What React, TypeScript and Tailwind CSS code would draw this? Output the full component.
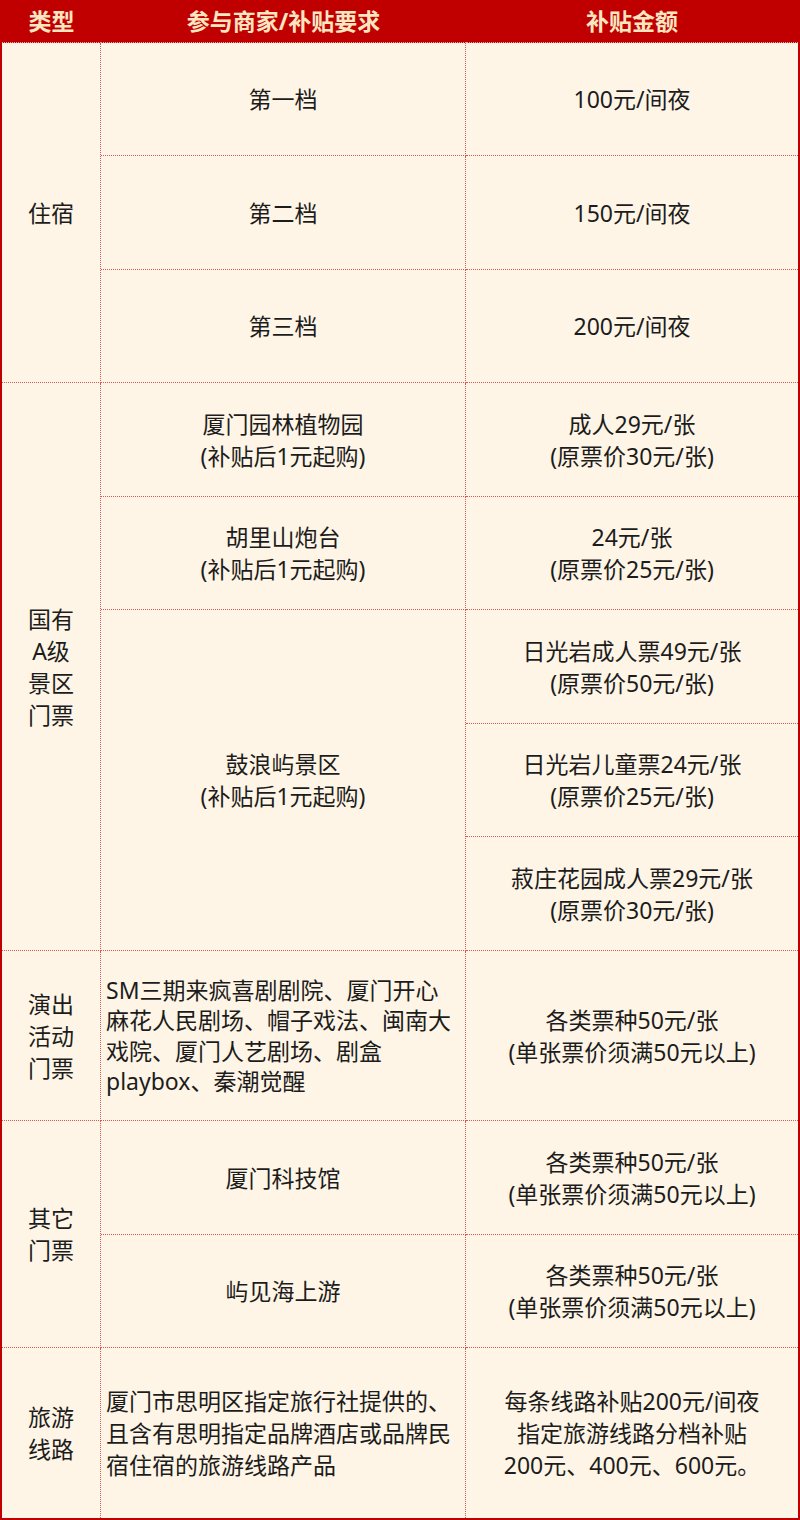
import React from "react";

const cell =
  "border-r border-b border-dotted border-[#d8585a] flex items-center justify-center text-center";
const cellLast =
  "border-b border-dotted border-[#d8585a] flex items-center justify-center text-center";

function Lines({ lines }: { lines: string[] }) {
  return (
    <div className="flex flex-col items-center">
      {lines.map((l, i) => (
        <span key={i} className="whitespace-nowrap">
          {l}
        </span>
      ))}
    </div>
  );
}

export default function App() {
  return (
    <div
      className="w-[800px] h-[1520px] bg-[#fef5e6] text-[#1c1c1c] text-[23px] leading-[32px] border-x-2 border-b-2 border-[#c00000]"
      style={{ fontFamily: '"Noto Sans", "Noto Sans CJK SC", sans-serif' }}
    >
      <div className="grid grid-cols-[99px_365px_1fr] grid-rows-[43px_113px_114px_113px_114px_113px_114px_113px_114px_170px_114px_113px_170px] h-[1518px]">
        {/* header */}
        <div className="bg-[#c00000] text-[#fce6c2] font-bold flex items-center justify-center border-b border-dotted border-[#e9a0a0]">
          类型
        </div>
        <div className="bg-[#c00000] text-[#fce6c2] font-bold flex items-center justify-center border-b border-dotted border-[#e9a0a0]">
          参与商家/补贴要求
        </div>
        <div className="bg-[#c00000] text-[#fce6c2] font-bold flex items-center justify-center border-b border-dotted border-[#e9a0a0]">
          补贴金额
        </div>

        {/* 住宿 */}
        <div className={`${cell} row-span-3`}>住宿</div>
        <div className={cell}>第一档</div>
        <div className={cellLast}>100元/间夜</div>
        <div className={cell}>第二档</div>
        <div className={cellLast}>150元/间夜</div>
        <div className={cell}>第三档</div>
        <div className={cellLast}>200元/间夜</div>

        {/* 国有A级景区门票 */}
        <div className={`${cell} row-span-5`}>
          <Lines lines={["国有", "A级", "景区", "门票"]} />
        </div>
        <div className={cell}>
          <Lines lines={["厦门园林植物园", "(补贴后1元起购)"]} />
        </div>
        <div className={cellLast}>
          <Lines lines={["成人29元/张", "(原票价30元/张)"]} />
        </div>
        <div className={cell}>
          <Lines lines={["胡里山炮台", "(补贴后1元起购)"]} />
        </div>
        <div className={cellLast}>
          <Lines lines={["24元/张", "(原票价25元/张)"]} />
        </div>
        <div className={`${cell} row-span-3`}>
          <Lines lines={["鼓浪屿景区", "(补贴后1元起购)"]} />
        </div>
        <div className={cellLast}>
          <Lines lines={["日光岩成人票49元/张", "(原票价50元/张)"]} />
        </div>
        <div className={cellLast}>
          <Lines lines={["日光岩儿童票24元/张", "(原票价25元/张)"]} />
        </div>
        <div className={cellLast}>
          <Lines lines={["菽庄花园成人票29元/张", "(原票价30元/张)"]} />
        </div>

        {/* 演出活动门票 */}
        <div className={cell}>
          <Lines lines={["演出", "活动", "门票"]} />
        </div>
        <div className="border-r border-b border-dotted border-[#d8585a] flex items-center justify-start text-left pl-[5px] leading-[30.5px]">
          <div className="flex flex-col items-start">
            <span className="whitespace-nowrap">SM三期来疯喜剧剧院、厦门开心</span>
            <span className="whitespace-nowrap">麻花人民剧场、帽子戏法、闽南大</span>
            <span className="whitespace-nowrap">戏院、厦门人艺剧场、剧盒</span>
            <span className="whitespace-nowrap">playbox、秦潮觉醒</span>
          </div>
        </div>
        <div className={cellLast}>
          <Lines lines={["各类票种50元/张", "(单张票价须满50元以上)"]} />
        </div>

        {/* 其它门票 */}
        <div className={`${cell} row-span-2`}>
          <Lines lines={["其它", "门票"]} />
        </div>
        <div className={cell}>厦门科技馆</div>
        <div className={cellLast}>
          <Lines lines={["各类票种50元/张", "(单张票价须满50元以上)"]} />
        </div>
        <div className={cell}>屿见海上游</div>
        <div className={cellLast}>
          <Lines lines={["各类票种50元/张", "(单张票价须满50元以上)"]} />
        </div>

        {/* 旅游线路 */}
        <div className="border-r border-dotted border-[#d8585a] flex items-center justify-center text-center">
          <Lines lines={["旅游", "线路"]} />
        </div>
        <div className="border-r border-dotted border-[#d8585a] flex items-center justify-start text-left pl-[5px]">
          <div className="flex flex-col items-start">
            <span className="whitespace-nowrap">厦门市思明区指定旅行社提供的、</span>
            <span className="whitespace-nowrap">且含有思明指定品牌酒店或品牌民</span>
            <span className="whitespace-nowrap">宿住宿的旅游线路产品</span>
          </div>
        </div>
        <div className="flex items-center justify-center text-center">
          <Lines lines={["每条线路补贴200元/间夜", "指定旅游线路分档补贴", "200元、400元、600元。"]} />
        </div>
      </div>
    </div>
  );
}
